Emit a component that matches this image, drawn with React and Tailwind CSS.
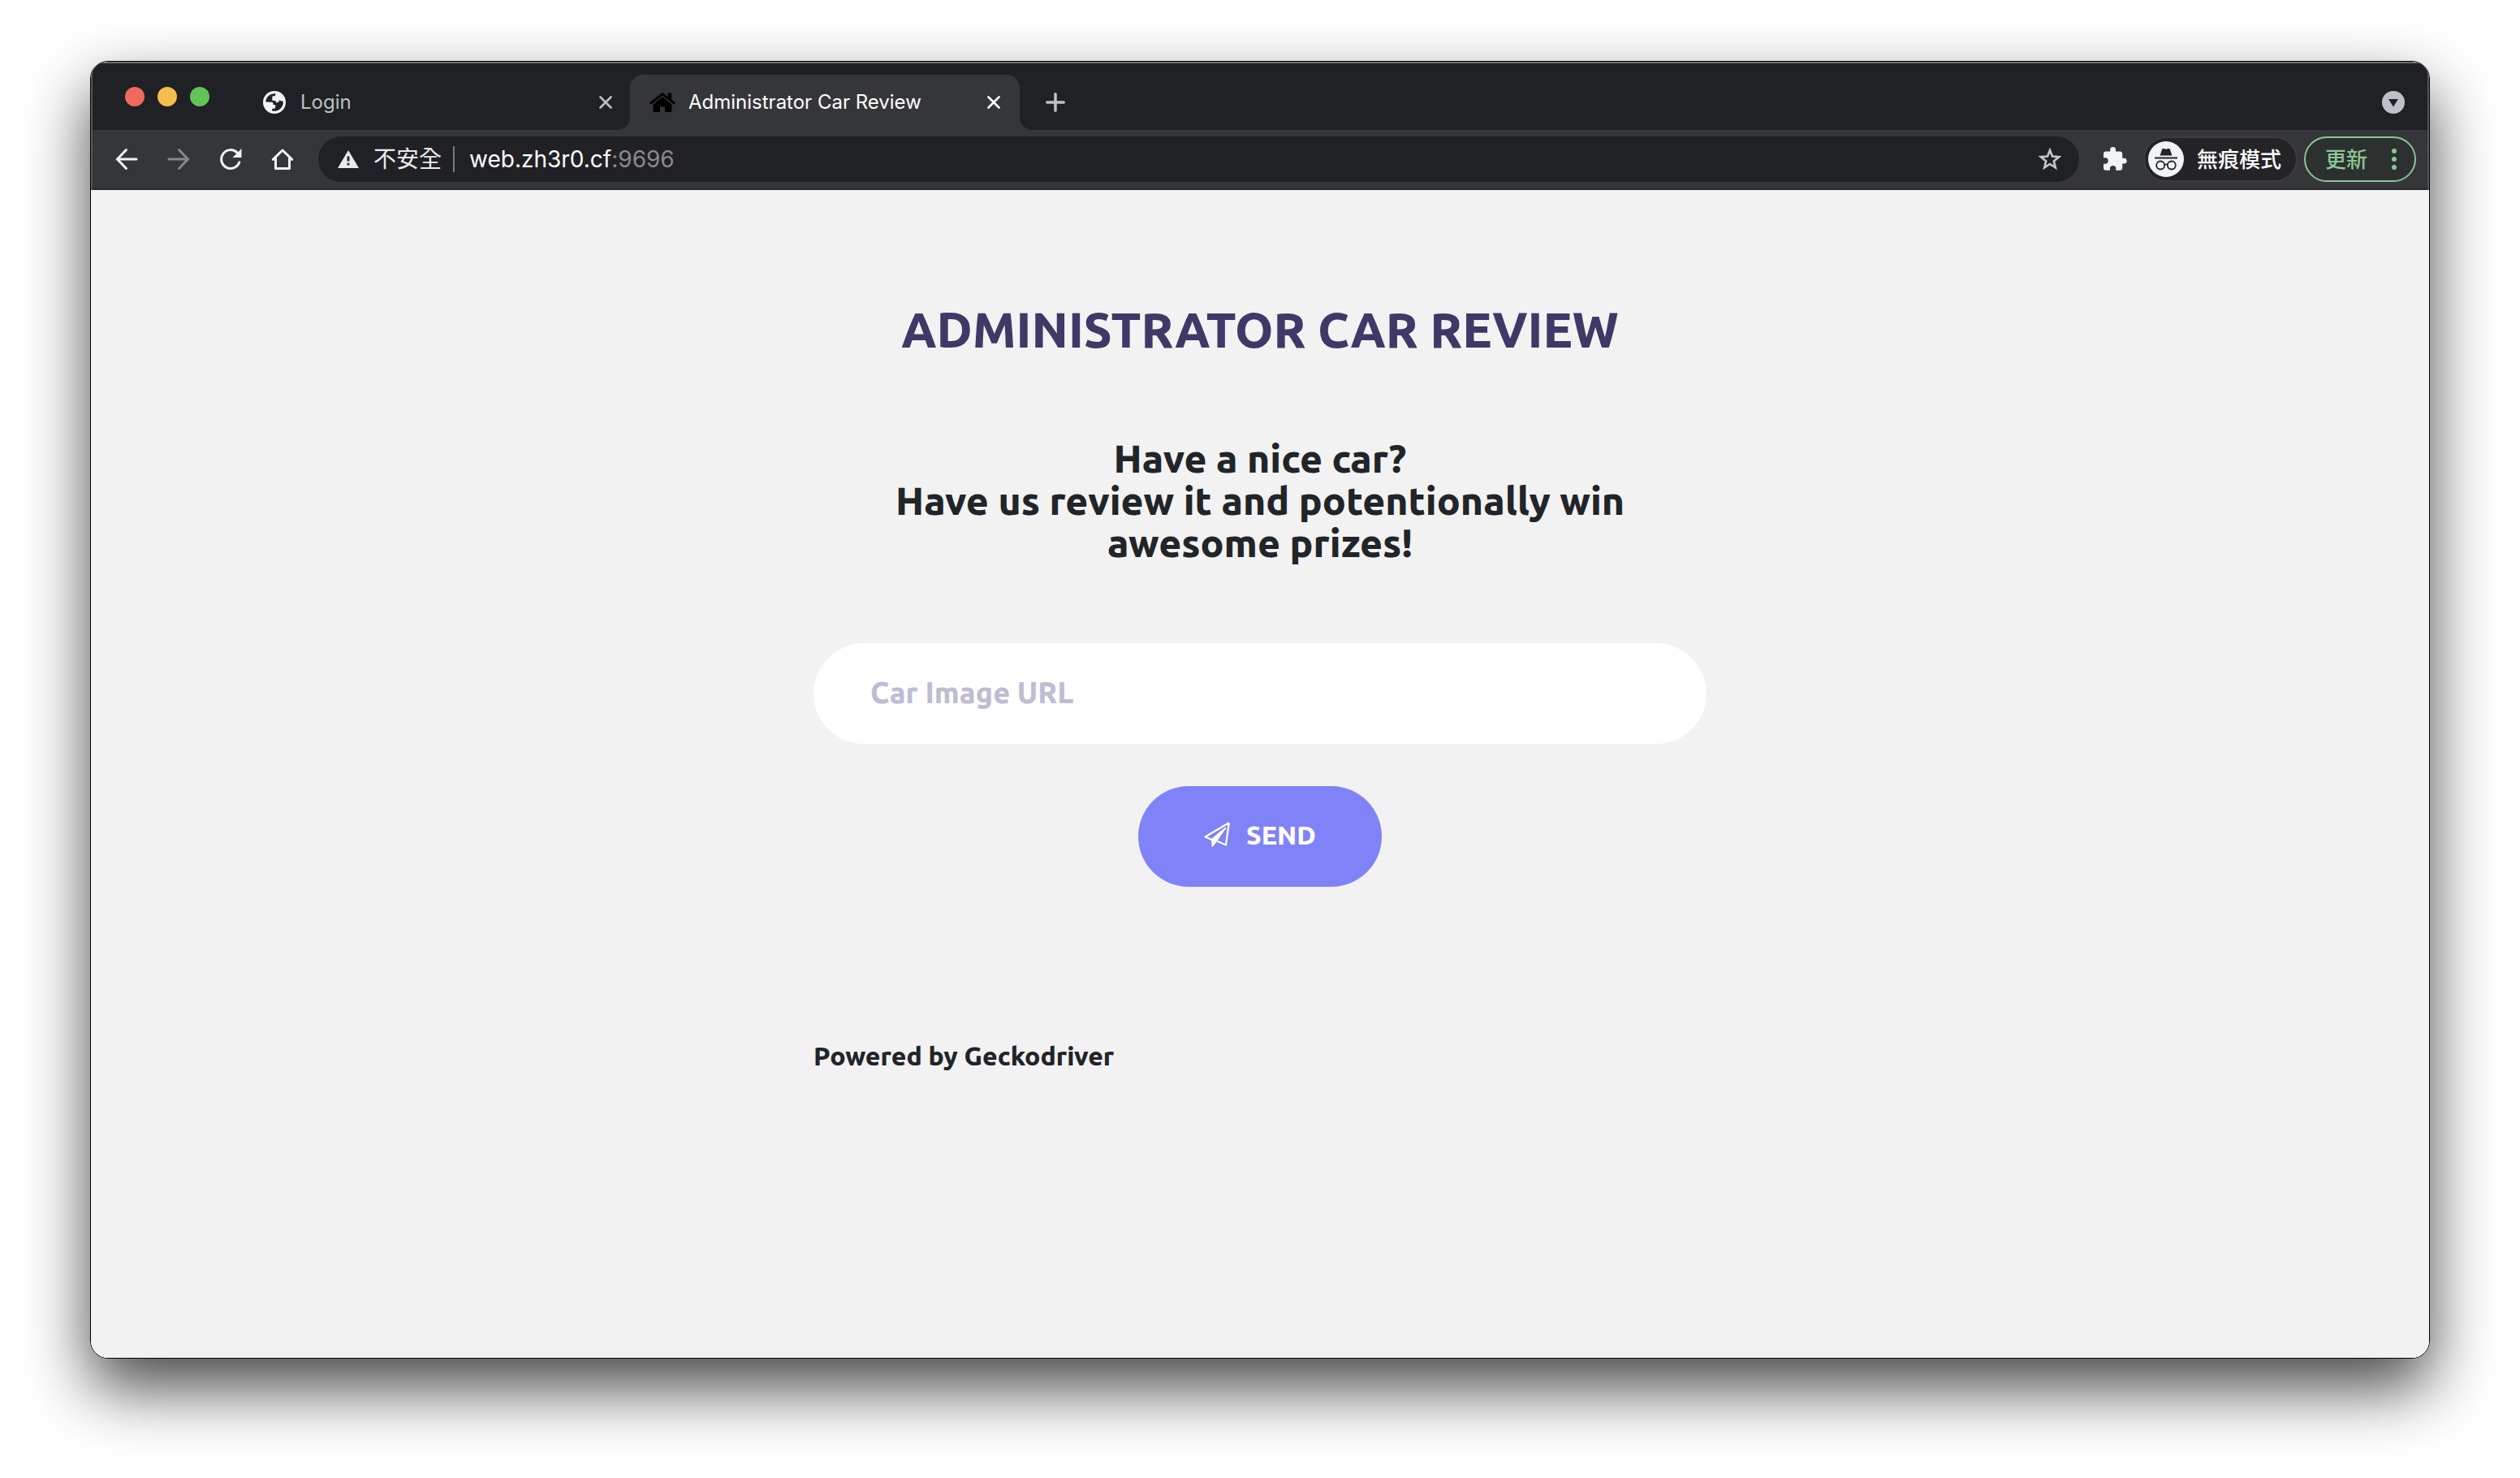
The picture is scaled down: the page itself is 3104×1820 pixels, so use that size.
const ui = "font-['Inter','Noto_Sans_CJK_TC',sans-serif]";

function Cross({ className }) {
  return (
    <svg viewBox="0 0 16 16" className={className} fill="none" stroke="currentColor" strokeWidth="2.6" strokeLinecap="round">
      <path d="M1.5 1.5l13 13M14.5 1.5l-13 13" />
    </svg>
  );
}

function TabStrip() {
  return (
    <div className="flex h-[82px] items-end bg-[#202124] pr-[28px]">
      <div className="flex w-[182px] shrink-0 gap-4 self-center pl-10">
        <button aria-label="Close window" className="size-6 rounded-full bg-[#ed6a5e]" />
        <button aria-label="Minimize window" className="size-6 rounded-full bg-[#f5bd4f]" />
        <button aria-label="Zoom window" className="size-6 rounded-full bg-[#61c454]" />
      </div>
      <div className="flex h-[68px] w-[480px] items-center pl-[28px] pr-[22px]">
        <svg viewBox="0 0 28 28" className="size-7 shrink-0">
          <circle cx="14" cy="14" r="14" fill="#f1f3f4" />
          <path
            d="M3.2 13.5A10.8 10.8 0 0 1 15.5 3.3L14.8 6.2H12.6a1.3 1.3 0 0 0-1.3 1.3V11a1 1 0 0 0 1 1h2.5a1 1 0 0 1 1 1v1.2h1.9a2 2 0 0 0 2-2v-.7l5.1 1.5A10.8 10.8 0 0 1 11.2 24.4v-2.6h2a2 2 0 0 0 2-2v-1.6a1.3 1.3 0 0 0-1.3-1.3H12.500v-1.500a1.600 1.600 0 0 0-1.600-1.600z"
            fill="#202124"
          />
        </svg>
        <button className="ml-[18px] grow text-left text-[24px] text-[#bdc1c6]">Login</button>
        <button aria-label="Close Login tab" className="text-[#bdc1c6]">
          <Cross className="size-4" />
        </button>
      </div>
      <div className="flex h-[68px] items-end">
        <svg viewBox="0 0 16 16" className="-ml-4 size-4" fill="#35363a">
          <path d="M16 0v16H0A16 16 0 0 0 16 0z" />
        </svg>
        <div className="flex h-[68px] w-[480px] items-center rounded-t-2xl bg-[#35363a] pl-6 pr-6">
          <svg viewBox="0 0 32 24" className="h-6 w-8 shrink-0" fill="#000">
            <path d="M16 0L0 12.500l1.800 2.300L16 3.500l14.200 11.300L32 12.500l-4.800-3.800V0.500h-4.500v4.600z" />
            <path d="M16 5.300L4.500 14.500V23a1 1 0 0 0 1 1H13v-6.500h6V24h7.500a1 1 0 0 0 1-1v-8.500z" />
          </svg>
          <button className="ml-4 grow text-left text-[24px] whitespace-nowrap text-white">Administrator Car Review</button>
          <button aria-label="Close Administrator Car Review tab" className="text-white">
            <Cross className="size-4" />
          </button>
        </div>
        <svg viewBox="0 0 16 16" className="size-4" fill="#35363a">
          <path d="M0 0v16h16A16 16 0 0 1 0 0z" />
        </svg>
      </div>
      <div className="flex h-[68px] grow items-center justify-between pl-4">
        <button aria-label="New tab" className="text-[#bdc1c6]">
          <svg viewBox="0 0 24 24" className="size-6" fill="none" stroke="currentColor" strokeWidth="3.500" strokeLinecap="round">
            <path d="M12 1.800v20.400M1.800 12h20.400" />
          </svg>
        </button>
        <button aria-label="Search tabs">
          <svg viewBox="0 0 28 28" className="size-7">
            <circle cx="14" cy="14" r="14" fill="#bdc1c6" />
            <path d="M8 10h12l-6 9.500z" fill="#202124" />
          </svg>
        </button>
      </div>
    </div>
  );
}

function Toolbar() {
  return (
    <div className="flex h-[74px] items-center border-b-2 border-[#28292c] bg-[#35363a] pl-7 pr-[14px]">
      <div className="flex shrink-0 gap-9 text-[#f1f3f4]">
        <button aria-label="Back">
          <svg viewBox="0 0 28 28" className="size-7" fill="none" stroke="currentColor" strokeWidth="3" strokeLinecap="round">
            <path d="M13.500 2.500L2.500 14l11 11.500M3 14h23" />
          </svg>
        </button>
        <button aria-label="Forward" className="text-[#87888a]" disabled>
          <svg viewBox="0 0 28 28" className="size-7" fill="none" stroke="currentColor" strokeWidth="3" strokeLinecap="round">
            <path d="M14.500 2.500l11 11.500-11 11.500M25 14H2" />
          </svg>
        </button>
        <button aria-label="Reload">
          <svg viewBox="0 0 28 28" className="size-7">
            <path d="M24.800 17.800A11.400 11.400 0 1 1 22 5.800" fill="none" stroke="currentColor" strokeWidth="3" strokeLinecap="round" />
            <path d="M27.500 1v11h-11z" fill="currentColor" />
          </svg>
        </button>
        <button aria-label="Home">
          <svg viewBox="0 0 28 28" className="size-7" fill="none" stroke="currentColor" strokeWidth="3" strokeLinecap="round" strokeLinejoin="round">
            <path d="M2.300 14.300L14 3l11.700 11.300M5.500 13v12.500h17V13" />
          </svg>
        </button>
      </div>
      <div className="ml-[30px] flex h-14 grow items-center rounded-full bg-[#202124] pl-6 pr-[22px] text-[28px] whitespace-nowrap">
        <svg viewBox="0 0 26 22" className="h-[22px] w-[26px] shrink-0" fill="#e8eaed">
          <path fillRule="evenodd" d="M13 0l13 22H0zM11.600 7.500v6h2.800v-6zM11.600 15.800v2.800h2.800v-2.800z" />
        </svg>
        <span className="ml-[18px] text-[#e8eaed]">不安全</span>
        <span className="ml-[14px] h-8 w-[2px] bg-[#797b7e]" />
        <div className="ml-[18px] grow text-white">
          web.zh3r0.cf<span className="text-[#8a8b8d]">:9696</span>
        </div>
        <button aria-label="Bookmark this page">
          <svg viewBox="0 0 28 28" className="size-7" fill="none" stroke="#c7c8ca" strokeWidth="2.600">
            <path d="M14 3l3 7.600 8 .6-6.200 5.200 2 8L14 20l-6.800 4.400 2-8L3 11.200l8-.6z" />
          </svg>
        </button>
      </div>
      <button aria-label="Extensions" className="ml-[29px]">
        <svg viewBox="1.500 1 21.500 22" className="size-[30px]" fill="#f1f3f4">
          <path d="M20.500 11H19V7c0-1.100-.9-2-2-2h-4V3.500a2.500 2.500 0 0 0-5 0V5H4c-1.100 0-2 .9-2 2v3.800h1.500a2.700 2.700 0 0 1 0 5.400H2V20c0 1.100.9 2 2 2h3.800v-1.500a2.700 2.700 0 0 1 5.400 0V22H17c1.100 0 2-.9 2-2v-4h1.500a2.500 2.500 0 0 0 0-5z" />
        </svg>
      </button>
      <button className="ml-5 flex h-14 items-center gap-4 rounded-full border-2 border-[#3c3d41] bg-[#242428] pl-1 pr-[18px] text-[26px] font-medium whitespace-nowrap text-white">
        <svg viewBox="0 0 44 44" className="size-11">
          <circle cx="22" cy="22" r="22" fill="#f1f3f4" />
          <path d="M14.500 17.500l3-8.500h2.500l2 1 2-1h2.500l3 8.500z" fill="#242428" />
          <path d="M8 20.500h28" stroke="#242428" strokeWidth="1.800" />
          <g fill="none" stroke="#242428" strokeWidth="1.800">
            <circle cx="15.200" cy="29.500" r="5" />
            <circle cx="28.800" cy="29.500" r="5" />
            <path d="M20 29q2-1.200 4 0" />
          </g>
        </svg>
        無痕模式
      </button>
      <button className="ml-2 flex h-14 items-center gap-[30px] rounded-full border-2 border-[#8bc695] bg-[#2c312f] pl-6 pr-[22px] text-[26px] font-medium whitespace-nowrap text-[#8bc695]">
        更新
        <svg viewBox="0 0 6 26" className="h-[26px] w-[6px]" fill="currentColor">
          <circle cx="3" cy="3" r="3" />
          <circle cx="3" cy="13" r="3" />
          <circle cx="3" cy="23" r="3" />
        </svg>
      </button>
    </div>
  );
}

function ReviewPage() {
  return (
    <main className="grow bg-[#f2f2f2] font-['Ubuntu','Noto_Sans',sans-serif] font-black text-[#212529]">
      <div className="mx-auto w-[1100px] max-w-full pt-[136px]">
        <h1 className="text-center text-[60px] leading-[72px] text-[#403866]">ADMINISTRATOR CAR REVIEW</h1>
        <h2 className="mt-24 text-center text-[48px] leading-[52px]">
          Have a nice car?
          <br />
          Have us review it and potentionally win
          <br />
          awesome prizes!
        </h2>
        <form className="mt-[98px] flex flex-col items-center" onSubmit={(e) => e.preventDefault()}>
          <input
            aria-label="Car Image URL"
            type="text"
            placeholder="Car Image URL"
            className="h-[124px] w-full rounded-[62px] bg-white px-[70px] pb-1 text-[36px] text-[#403866] outline-none placeholder:text-[#bdbdd3]"
          />
          <button type="submit" className="mt-[52px] flex h-[124px] w-[300px] items-center justify-center gap-5 rounded-[62px] bg-[#8083f7] pb-1 text-[32px] text-white">
            <svg viewBox="0 0 32 32" className="size-8" fill="none" stroke="#fff" strokeWidth="2.200" strokeLinejoin="round">
              <path d="M30.800 1.200L1.500 18.500l8 3.500L27 7.500M30.800 1.200L27 28.500l-10.500-4.500" />
              <path d="M9.700 22.500L26 8.500 15 24.500l-4.800 6z" fill="#fff" strokeWidth="1.200" />
            </svg>
            SEND
          </button>
        </form>
        <p className="mt-[184px] text-[32px] leading-[48px]">Powered by Geckodriver</p>
      </div>
    </main>
  );
}

export default function App() {
  return (
    <div className={`flex min-h-screen bg-white px-[111px] pt-[75px] pb-[147px] ${ui}`}>
      <div className="flex grow flex-col overflow-hidden rounded-[22px] border border-black shadow-[0_36px_80px_rgba(0,0,0,0.72)]">
        <div className="border-x-2 border-t-2 border-t-[#6c6e6f] border-x-[#55565a]">
          <TabStrip />
          <Toolbar />
        </div>
        <ReviewPage />
      </div>
    </div>
  );
}
